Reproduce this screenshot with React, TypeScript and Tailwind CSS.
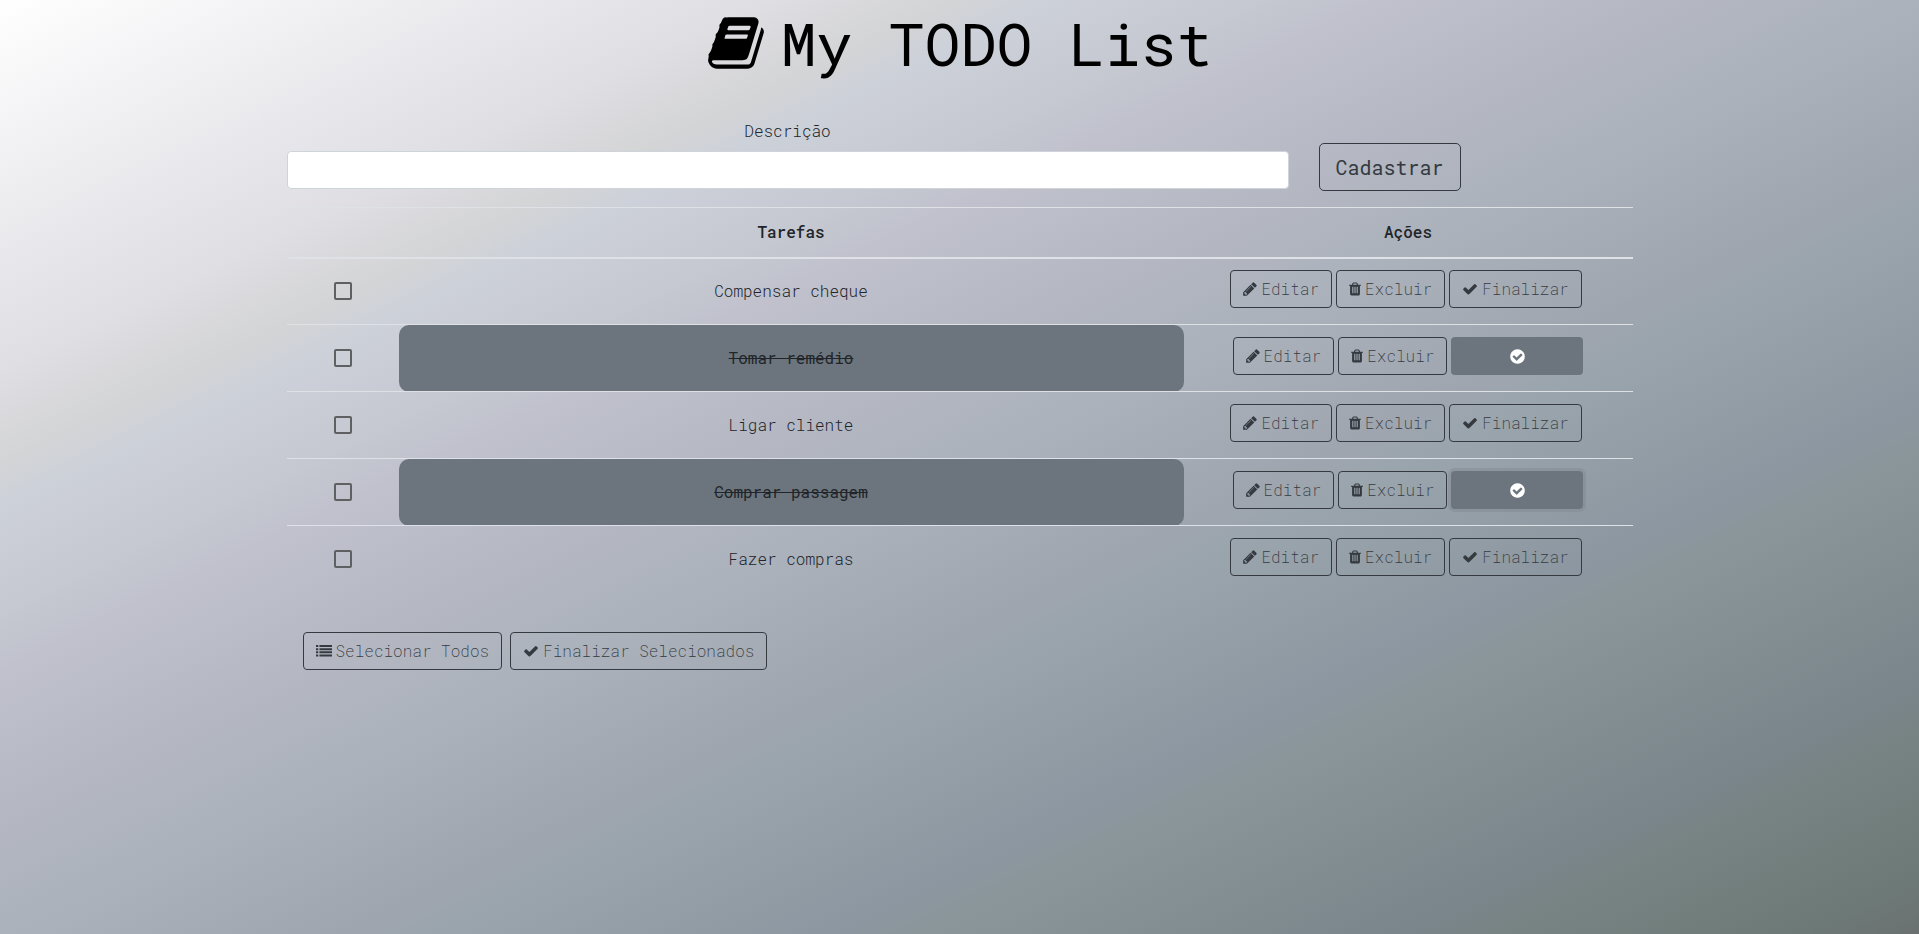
import React, { useState } from "react";

type Task = { id: number; title: string; done: boolean; focused?: boolean };

const initialTasks: Task[] = [
  { id: 1, title: "Compensar cheque", done: false },
  { id: 2, title: "Tomar remédio", done: true },
  { id: 3, title: "Ligar cliente", done: false },
  { id: 4, title: "Comprar passagem", done: true, focused: true },
  { id: 5, title: "Fazer compras", done: false },
];

const icons = {
  book: "M1703 478q40 57 18 129l-275 906q-19 64-76.5 107.5t-122.5 43.5h-923q-77 0-148.5-53.5t-99.5-131.5q-24-67-2-127 0-4 3-27t4-37q1-8-3-21.5t-3-19.5q2-11 8-21t16.5-23.5 16.5-23.5q23-38 45-91.500t30-91.500q3-10 .5-30t-.5-28q3-11 17-28t17-23q21-36 42-92t25-90q1-9-2.500-32t.5-28q4-13 22-30.500t22-22.500q19-26 42.500-84.500t27.500-96.500q1-8-3-25.500t-2-26.500q2-8 9-18t18-23 17-21q8-12 16.500-30.500t15-35 16-36 19.500-32 26.500-23.500 36-11.500 47.500 5.500l-1 3q38-9 51-9h761q74 0 114 56t18 130l-274 906q-36 119-71.500 153.500t-128.500 34.500h-869q-27 0-38 15-11 16-1 43 24 70 144 70h923q29 0 56-15.500t35-41.500l300-987q7-22 5-57 38 15 59 43zm-1064 2q-4 13 2 22.500t20 9.500h608q13 0 25.500-9.500t16.500-22.500l21-64q4-13-2-22.500t-20-9.500h-608q-13 0-25.500 9.500t-16.500 22.500zm-83 256q-4 13 2 22.500t20 9.500h608q13 0 25.500-9.500t16.500-22.500l21-64q4-13-2-22.500t-20-9.500h-608q-13 0-25.500 9.500t-16.500 22.500z",
  pencil: "M491 1536l91-91-235-235-91 91v107h128v128h107zm523-928q0-22-22-22-10 0-17 7l-542 542q-7 7-7 17 0 22 22 22 10 0 17-7l542-542q7-7 7-17zm-54-192l416 416-832 832h-416v-416zm683 96q0 53-37 90l-166 166-416-416 166-165q36-38 90-38 53 0 91 38l235 234q37 39 37 91z",
  trash: "M704 1376v-704q0-14-9-23t-23-9h-64q-14 0-23 9t-9 23v704q0 14 9 23t23 9h64q14 0 23-9t9-23zm256 0v-704q0-14-9-23t-23-9h-64q-14 0-23 9t-9 23v704q0 14 9 23t23 9h64q14 0 23-9t9-23zm256 0v-704q0-14-9-23t-23-9h-64q-14 0-23 9t-9 23v704q0 14 9 23t23 9h64q14 0 23-9t9-23zm-544-992h448l-48-117q-7-9-17-11h-317q-10 2-17 11zm928 32v64q0 14-9 23t-23 9h-96v948q0 83-47 143.500t-113 60.500h-832q-66 0-113-58.500t-47-141.500v-952h-96q-14 0-23-9t-9-23v-64q0-14 9-23t23-9h309l70-167q15-37 54-63t79-26h320q40 0 79 26t54 63l70 167h309q14 0 23 9t9 23z",
  check: "M1671 566q0 40-28 68l-724 724-136 136q-28 28-68 28t-68-28l-136-136-362-362q-28-28-28-68t28-68l136-136q28-28 68-28t68 28l294 295 656-657q28-28 68-28t68 28l136 136q28 28 28 68z",
  checkCircle: "M1412 734q0-28-18-46l-91-90q-19-19-45-19t-45 19l-408 407-226-226q-19-19-45-19t-45 19l-91 90q-18 18-18 46 0 27 18 45l362 362q19 19 45 19 27 0 46-19l543-543q18-18 18-45zm252 162q0 209-103 385.500t-279.500 279.500-385.500 103-385.500-103-279.500-279.500-103-385.500 103-385.500 279.500-279.500 385.500-103 385.500 103 279.500 279.500 103 385.500z",
  list: "M0 224h256v224H0zM384 224h1408v224H384zM0 576h256v224H0zM384 576h1408v224H384zM0 928h256v224H0zM384 928h1408v224H384zM0 1280h256v224H0zM384 1280h1408v224H384z",
};

function Icon({ name, className = "size-4", viewBox = "0 0 1792 1792" }: { name: keyof typeof icons; className?: string; viewBox?: string }) {
  return (
    <svg viewBox={viewBox} className={className} fill="currentColor" aria-hidden="true">
      <path d={icons[name]} />
    </svg>
  );
}

const outlineButton =
  "inline-flex h-[38px] items-center justify-center gap-1 rounded border border-[#343a40] px-3 font-extralight text-[#343a40]";

export default function App() {
  const [tasks, setTasks] = useState(initialTasks);
  const [selected, setSelected] = useState<number[]>([]);
  const [description, setDescription] = useState("");

  const finish = (ids: number[]) =>
    setTasks(tasks.map((t) => (ids.includes(t.id) ? { ...t, done: true } : t)));

  return (
    <div className="min-h-screen bg-[linear-gradient(to_bottom_right,#ffffff_0%,#e8e7eb_14%,#dfdee3_20%,#d3d4d6_25%,#cdd1d9_27%,#c5c8d0_33%,#c0c1cd_36%,#b1b5c0_46%,#abb2bc_50%,#9fa5af_59%,#9ba5ad_61%,#8c96a0_72%,#8a969a_74%,#7a858b_87%,#788383_89%,#6d7977_97%,#6b7071_100%)] font-['Roboto_Mono','Liberation_Mono',monospace] text-base font-light text-[#212529]">
      <main className="mx-auto max-w-[1346px] pt-2">
        <h1 className="flex items-center justify-center gap-3.5 text-[60px] leading-[70px] font-normal text-black">
          <Icon name="book" className="size-[60px]" />
          My TODO List
        </h1>
        <form
          className="mt-[41px] flex items-end gap-[30px]"
          onSubmit={(e) => {
            e.preventDefault();
            if (!description) return;
            setTasks([...tasks, { id: Date.now(), title: description, done: false }]);
            setDescription("");
          }}
        >
          <div className="flex w-[1002px] flex-col gap-2 pb-[2px]">
            <label htmlFor="description" className="text-center leading-6">Descrição</label>
            <input
              id="description"
              value={description}
              onChange={(e) => setDescription(e.target.value)}
              className="h-[38px] rounded border border-[#ced4da] bg-white px-3"
            />
          </div>
          <button className="h-12 rounded-[5px] border border-[#343a40] px-4 text-xl font-normal text-[#343a40]">
            Cadastrar
          </button>
        </form>
        <table className="mt-4 w-full table-fixed border-collapse text-center">
          <colgroup>
            <col className="w-[112px]" />
            <col />
            <col className="w-[449px]" />
          </colgroup>
          <thead>
            <tr className="h-[50px] border-t border-b-2 border-[#dee2e6]">
              <th aria-label="Selecionar" />
              <th className="font-medium">Tarefas</th>
              <th className="font-medium">Ações</th>
            </tr>
          </thead>
          <tbody>
            {tasks.map((t) => (
              <tr key={t.id} className="h-[67px] border-t border-[#dee2e6]">
                <td>
                  <input
                    type="checkbox"
                    aria-label={t.title}
                    checked={selected.includes(t.id)}
                    onChange={() =>
                      setSelected(selected.includes(t.id) ? selected.filter((i) => i !== t.id) : [...selected, t.id])
                    }
                    className="mx-auto block size-[18px] appearance-none rounded-[2px] border-2 border-[#5f6062] checked:bg-[#5f6062]"
                  />
                </td>
                <td className={t.done ? "rounded-[10px] bg-[#6c757d] font-normal line-through" : ""}>{t.title}</td>
                <td className="pb-1">
                  <div className={t.done ? "flex justify-center gap-1" : "flex justify-center gap-1 pr-1"}>
                    <button className={outlineButton}>
                      <Icon name="pencil" className="h-4 w-3.5" viewBox="128 0 1536 1792" />
                      Editar
                    </button>
                    <button className={outlineButton} onClick={() => setTasks(tasks.filter((x) => x.id !== t.id))}>
                      <Icon name="trash" className="h-4 w-3" viewBox="192 0 1408 1792" />
                      Excluir
                    </button>
                    {t.done ? (
                      <button
                        aria-label="Finalizada"
                        className={
                          t.focused
                            ? "flex h-[38px] w-[132px] items-center justify-center rounded bg-[#6c757d] text-white ring-3 ring-[#828a91]/50"
                            : "flex h-[38px] w-[132px] items-center justify-center rounded bg-[#6c757d] text-white"
                        }
                      >
                        <Icon name="checkCircle" className="size-[17px]" />
                      </button>
                    ) : (
                      <button className={outlineButton} onClick={() => finish([t.id])}>
                        <Icon name="check" />
                        Finalizar
                      </button>
                    )}
                  </div>
                </td>
              </tr>
            ))}
          </tbody>
        </table>
        <div className="mt-[39px] flex gap-2 px-4">
          <button className={outlineButton} onClick={() => setSelected(tasks.map((t) => t.id))}>
            <Icon name="list" />
            Selecionar Todos
          </button>
          <button className={outlineButton} onClick={() => finish(selected)}>
            <Icon name="check" />
            Finalizar Selecionados
          </button>
        </div>
      </main>
    </div>
  );
}
